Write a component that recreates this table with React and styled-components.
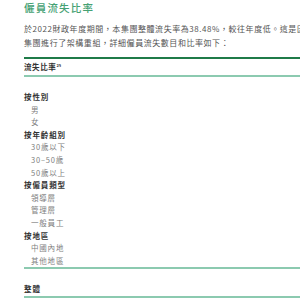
import React from "react";
import styled, { createGlobalStyle } from "styled-components";

const Global = createGlobalStyle`
  html, body {
    margin: 0;
    padding: 0;
    background: #ffffff;
    overflow: hidden;
  }
  body {
    font-family: "Noto Sans CJK TC", "Noto Sans", sans-serif;
  }
`;

const Page = styled.div`
  width: 300px;
  height: 300px;
  overflow: hidden;
  padding-left: 24px;
  box-sizing: border-box;
`;

const Title = styled.h2`
  margin: 0;
  font-size: 10.5px;
  line-height: 16px;
  font-weight: 500;
  letter-spacing: 1.2px;
  color: #45a173;
`;

const Intro = styled.p`
  margin: 6px 0 0;
  font-size: 8px;
  line-height: 13.5px;
  letter-spacing: 0.55px;
  color: #555;
  white-space: nowrap;
`;

const Table = styled.div`
  margin-top: 8px;
  width: 320px;
`;

const HeadRow = styled.div`
  border-top: 2px solid #1f7b48;
  border-bottom: 2px solid #8ccab0;
  padding: 3px 0 3px;
  height: 10px;
  font-size: 7.5px;
  line-height: 10px;
  font-weight: 700;
  letter-spacing: 0.6px;
  color: #333;
`;

const Sup = styled.span`
  position: relative;
  top: -3px;
  font-size: 4px;
  line-height: 0;
  letter-spacing: 0;
`;

const Body = styled.div`
  padding-top: 14px;
  border-bottom: 2px solid #8ccab0;
`;

const Row = styled.div`
  height: 12.6px;
  line-height: 12.6px;
  font-size: 7.5px;
  letter-spacing: ${p => (p.$group ? "0.9px" : "0.8px")};
  font-weight: ${p => (p.$group ? 700 : 400)};
  color: ${p => (p.$group ? "#333" : "#808080")};
  padding-left: ${p => (p.$group ? "0" : "7px")};
  white-space: nowrap;
`;

const Total = styled.div`
  padding-top: 14px;
  border-bottom: 2px solid #8ccab0;
`;

const rows = [
  { label: "按性別", group: true },
  { label: "男" },
  { label: "女" },
  { label: "按年齡組別", group: true },
  { label: "30歲以下" },
  { label: "30–50歲" },
  { label: "50歲以上" },
  { label: "按僱員類型", group: true },
  { label: "領導層" },
  { label: "管理層" },
  { label: "一般員工" },
  { label: "按地區", group: true },
  { label: "中國內地" },
  { label: "其他地區" },
];

export default function App() {
  return (
    <>
      <Global />
      <Page>
        <Title>僱員流失比率</Title>
        <Intro>
          於2022財政年度期間，本集團整體流失率為38.48%，較往年度低。這是因為本
          <br />
          集團進行了架構重組，詳細僱員流失數目和比率如下：
        </Intro>
        <Table>
          <HeadRow>
            流失比率<Sup>25</Sup>
          </HeadRow>
          <Body>
            {rows.map(r => (
              <Row key={r.label} $group={r.group}>
                {r.label}
              </Row>
            ))}
          </Body>
          <Total>
            <Row $group>整體</Row>
          </Total>
        </Table>
      </Page>
    </>
  );
}
